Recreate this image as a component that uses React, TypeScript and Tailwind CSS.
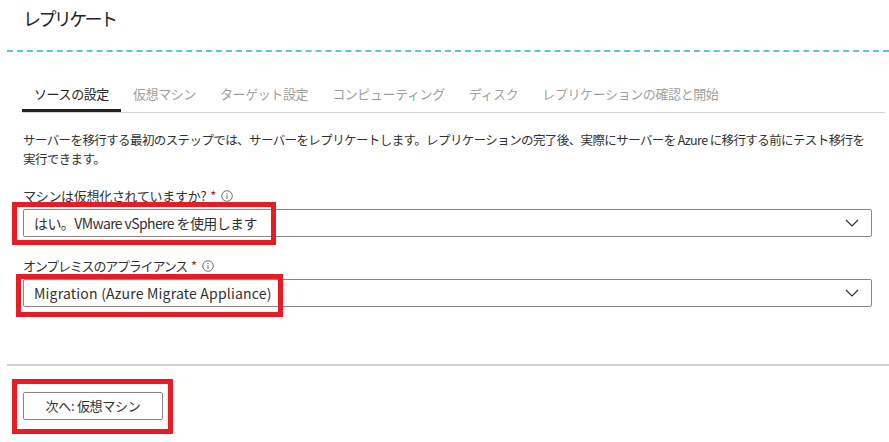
const tabs = [
  "ソースの設定",
  "仮想マシン",
  "ターゲット設定",
  "コンピューティング",
  "ディスク",
  "レプリケーションの確認と開始",
];

const Chevron = () => (
  <svg className="w-[14px] h-[8px]" viewBox="0 0 14 8" fill="none">
    <path d="M1 1l6 6 6-6" stroke="#323130" strokeWidth={1.2} />
  </svg>
);

const InfoIcon = () => (
  <svg className="w-[12px] h-[12px] ml-[5px]" viewBox="0 0 12 12" fill="none">
    <circle cx="6" cy="6" r="5.3" stroke="#605e5c" strokeWidth={0.9} />
    <path d="M6 5.2v3.6" stroke="#605e5c" strokeWidth={1} />
    <circle cx="6" cy="3.4" r="0.6" fill="#605e5c" />
  </svg>
);

const Field = ({
  label,
  value,
  labelClass,
  valueClass,
}: {
  label: string;
  value: string;
  labelClass: string;
  valueClass: string;
}) => (
  <div className="flex flex-col">
    <div className="flex items-center h-[16px] text-[13px] text-[#323130]">
      <span className={labelClass}>{label}</span>
      <span className="text-[#a4262c] ml-[4px]">*</span>
      <InfoIcon />
    </div>
    <div className="mt-[5px] h-[28px] border border-[#8a8886] rounded-[2px] flex items-center justify-between pl-[10px] pr-[12px] text-[14px] text-[#323130]">
      <span className={valueClass}>{value}</span>
      <Chevron />
    </div>
  </div>
);

export default function App() {
  return (
    <div
      className="relative w-[889px] h-[442px] bg-white overflow-hidden text-[#323130]"
      style={{ fontFamily: '"Noto Sans CJK JP", "Noto Sans", sans-serif' }}
    >
      <div className="pl-[23px] pt-[5px] h-[36px] text-[18px] leading-[26px] tracking-[-2.6px] text-[#252423]">
        レプリケート
      </div>

      <div className="ml-[7px] mt-[14px] border-t-[2px] border-dashed border-[#5bc3e6]" />

      {/* タブ */}
      <div className="ml-[22px] mr-[4px] mt-[32px] flex border-b border-[#d4d4d4] text-[13px] leading-[20px] tracking-[-0.4px]">
        {tabs.map((t, i) => (
          <div
            key={t}
            className={
              i === 0
                ? "px-[12px] h-[28px] border-b-[3px] border-[#222] -mb-[1px] text-[#252423]"
                : "px-[12px] h-[28px] text-[#a19f9d]"
            }
          >
            {t}
          </div>
        ))}
      </div>

      <div className="mx-[23px] mt-[17px] text-[12.5px] leading-[19px] tracking-[-0.6px] whitespace-nowrap">
        サーバーを移行する最初のステップでは、サーバーをレプリケートします。レプリケーションの完了後、実際にサーバーを Azure に移行する前にテスト移行を
        <br />
        実行できます。
      </div>

      <div className="ml-[23px] mr-[17px] mt-[20px] flex flex-col gap-[21px]">
        <Field
          label="マシンは仮想化されていますか?"
          value="はい。VMware vSphere を使用します"
          labelClass="tracking-[-0.3px]"
          valueClass="tracking-[-0.6px]"
        />
        <Field
          label="オンプレミスのアプライアンス"
          value="Migration (Azure Migrate Appliance)"
          labelClass="tracking-[-1.2px]"
          valueClass="tracking-[0.2px]"
        />
      </div>

      <div className="ml-[7px] mt-[57px] border-t-[2px] border-[#cfcfcf]" />

      <div className="ml-[23px] mt-[26px]">
        <button className="w-[140px] h-[28px] border border-[#8a8886] rounded-[2px] bg-white text-[13px] text-[#323130] tracking-[-0.3px]">
          次へ: 仮想マシン
        </button>
      </div>

      {/* 注釈の赤枠 */}
      <div className="absolute left-[12px] top-[202px] w-[264px] h-[43px] border-[5px] border-[#e81c24]" />
      <div className="absolute left-[16px] top-[274px] w-[267px] h-[43px] border-[5px] border-[#e81c24]" />
      <div className="absolute left-[12px] top-[379px] w-[161px] h-[55px] border-[5px] border-[#e81c24]" />
    </div>
  );
}
